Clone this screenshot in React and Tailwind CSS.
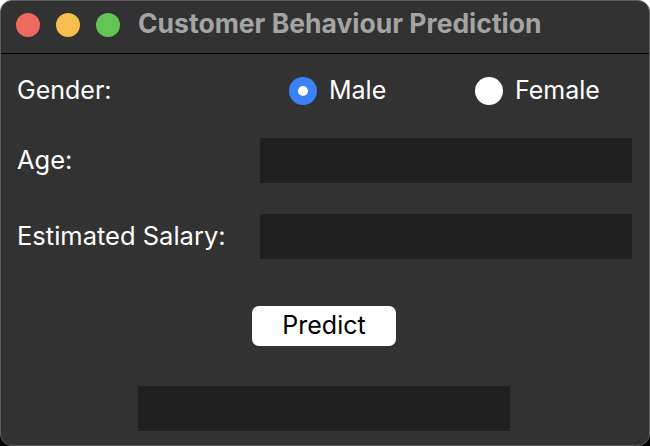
export default function App() {
  const fields = ["Age:", "Estimated Salary:"];

  return (
    <div className="h-[446px] w-[650px] bg-[linear-gradient(to_bottom,#ffffff_50%,#000000_50%)] font-['Inter','Liberation_Sans',sans-serif]">
      <div className="flex h-full flex-col overflow-hidden rounded-[12px] border border-[#5c5c5c] bg-[#323232]">
        <header className="flex h-[53px] shrink-0 items-start border-b border-black px-[15px] pt-[9px]">
          <div className="mt-[3px] flex gap-[16px]">
            <span className="h-[24px] w-[24px] rounded-full bg-[#ee6a5f]" />
            <span className="h-[24px] w-[24px] rounded-full bg-[#f5be4f]" />
            <span className="h-[24px] w-[24px] rounded-full bg-[#62c554]" />
          </div>
          <h1 className="ml-[18px] text-[26.5px] leading-[26px] font-bold text-[#a4a4a4]">
            Customer Behaviour Prediction
          </h1>
        </header>

        <main className="flex flex-col px-[16px] text-[25px] text-white">
          <div className="mt-[21px] flex h-[32px] items-center">
            <span className="w-[272px]">Gender:</span>
            <label className="flex w-[186px] items-center gap-[12px]">
              <span className="flex h-[28px] w-[28px] items-center justify-center rounded-full bg-[#3b82f6]">
                <span className="h-[10px] w-[10px] rounded-full bg-white" />
              </span>
              Male
            </label>
            <label className="flex items-center gap-[12px]">
              <span className="h-[28px] w-[28px] rounded-full bg-white" />
              Female
            </label>
          </div>

          {fields.map((label) => (
            <div key={label} className="mt-[31px] flex items-center">
              <span className="w-[243px] text-[25.5px]">{label}</span>
              <div className="h-[45px] w-[372px] bg-[#1f1f1f]" />
            </div>
          ))}

          <div className="mt-[47px] flex justify-center">
            <button className="ml-[-2px] h-[40px] w-[144px] rounded-[7px] bg-white text-[25px] text-black">
              Predict
            </button>
          </div>

          <div className="mt-[40px] flex justify-center">
            <div className="ml-[-2px] h-[45px] w-[372px] bg-[#1f1f1f]" />
          </div>
        </main>
      </div>
    </div>
  );
}
